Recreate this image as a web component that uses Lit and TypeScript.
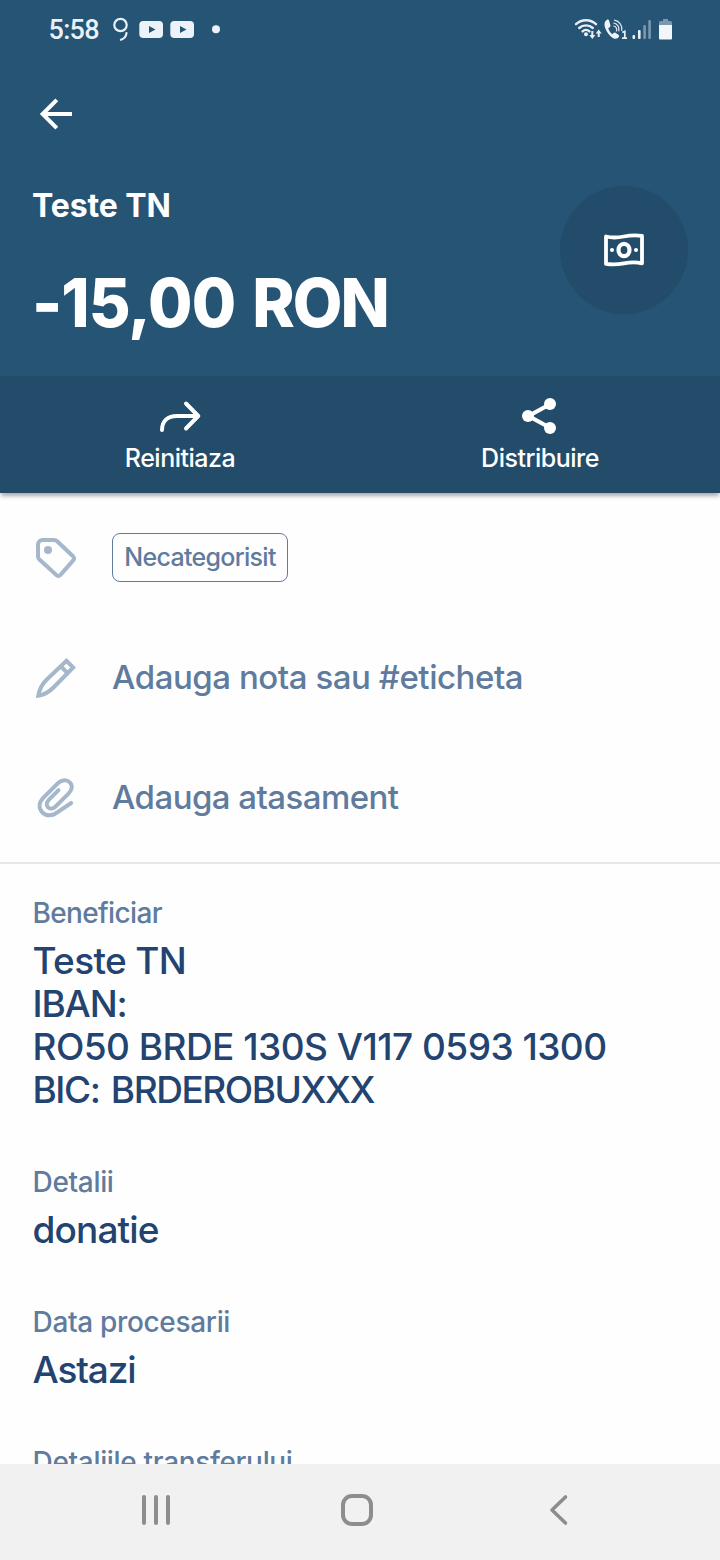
import { LitElement, html, css, svg } from "lit";
import { customElement } from "lit/decorators.js";

const wifi = svg`
  <g fill="none" stroke="#e9eef5" stroke-width="2.4" stroke-linecap="round">
    <path d="M16 24.2a14.5 14.5 0 0 1 20 0"/>
    <path d="M19.2 28a10 10 0 0 1 13.6 0"/>
    <path d="M22.6 31.4a5 5 0 0 1 6.8 0"/>
  </g>
  <circle cx="26" cy="34.2" r="2" fill="#e9eef5"/>
  <path d="M31.300 31v4h-2l3 4 3-4h-2v-4zM37.700 37v-3.500h-2l3-4 3 4h-2V37z" fill="#e9eef5"/>`;

const call = svg`
  <path d="M47.2 19.6c-2.6 1.6-3.4 4.4-2.2 8 1.8 5 4.6 8.6 8.6 10.8 2.2 1.1 4.6.2 5.4-1.8.3-.8.1-1.3-.6-1.8l-3-2c-.7-.4-1.3-.2-1.9.3l-1.2 1.1c-2-1.6-3.4-3.6-4-6l1.6-1.2c.6-.5.7-1 .5-1.7l-1.3-4.6c-.3-1-.9-1.6-1.9-1.1z" fill="#eef3f8"/>
  <g fill="none" stroke="#dfe7ef" stroke-width="1.2" stroke-linecap="round">
    <path d="M53.8 26a3.600 3.600 0 0 1 2.600 5"/>
    <path d="M53.8 23a6.500 6.500 0 0 1 5 8"/>
    <path d="M54.5 20.2a9 9 0 0 1 7.300 10.300"/>
  </g>`;

@customElement("app-root")
export class AppRoot extends LitElement {
  static styles = css`
    :host {
      display: flex;
      flex-direction: column;
      width: 720px;
      height: 1560px;
      overflow: hidden;
      background: #fefefe;
      font-family: Inter, "Liberation Sans", sans-serif;
      color: #234370;
    }
    svg { display: block; flex: none; }
    .head { background: #265475; color: #fff; height: 376px; flex: none; }
    .status { display: flex; justify-content: space-between; height: 60px; }
    .left { display: flex; padding-left: 48.5px; }
    .clock {
      width: 60.5px;
      font: 500 27px/60px Roboto, sans-serif;
      letter-spacing: -0.7px;
      color: #eaf0f7;
    }
    .back { box-sizing: border-box; padding: 34px 0 0 36px; height: 108px; }
    .summary { display: flex; justify-content: space-between; padding: 18px 32px 0 32px; }
    .name { font-weight: 700; font-size: 32px; line-height: 40px; letter-spacing: -0.12px; white-space: nowrap; }
    .amount {
      margin-top: 37px;
      font-weight: 800;
      font-size: 67px;
      line-height: 80px;
      letter-spacing: -1px;
      white-space: nowrap;
      transform: scaleX(0.96);
      transform-origin: left;
    }
    .currency { letter-spacing: -2px; margin-left: 4px; }
    .disc {
      display: flex;
      align-items: center;
      justify-content: center;
      width: 128px;
      height: 128px;
      border-radius: 50%;
      background: #224c6a;
    }
    .actions {
      display: grid;
      grid-template-columns: 1fr 1fr;
      flex: none;
      height: 117px;
      background: #224c6a;
      color: #fff;
      box-shadow: 0 4px 4px -1px rgba(0, 0, 0, 0.33);
    }
    .action { display: flex; flex-direction: column; align-items: center; padding-top: 16px; }
    .action span { font-size: 25px; font-weight: 500; line-height: 30px; margin-top: 3px; letter-spacing: -0.5px; }
    .rows { padding-top: 5px; height: 364px; flex: none; border-bottom: 2px solid #e4e8ec; }
    .row {
      display: flex;
      align-items: center;
      height: 120px;
      padding-left: 32px;
      gap: 32px;
      font-size: 33px;
      font-weight: 500;
      color: #5f7b9d;
    }
    .row span { margin-bottom: 2px; }
    .note { letter-spacing: -0.45px; }
    .attach { letter-spacing: -0.55px; }
    .chip {
      box-sizing: border-box;
      width: 176px;
      height: 49px;
      border: 1px solid #5f7b9d;
      border-radius: 8px;
      font-size: 25px;
      line-height: 47px;
      letter-spacing: -0.7px;
      text-align: center;
      white-space: nowrap;
    }
    .details { flex: 1; min-height: 0; overflow: hidden; padding: 32px 33px 0 32.5px; }
    .label { font-size: 28px; font-weight: 500; line-height: 34px; letter-spacing: -0.33px; color: #5f7b9d; }
    .value {
      font-size: 37px;
      font-weight: 500;
      line-height: 43px;
      margin: 9px 0 54px;
      letter-spacing: -0.85px;
      white-space: nowrap;
    }
    .tight { letter-spacing: -0.65px; }
    .short { letter-spacing: -1.15px; }
    .iban { letter-spacing: -0.54px; }
    .bic { letter-spacing: -1.45px; word-spacing: 3px; }
    .nav { flex: none; height: 96px; background: #f1f1f1; }
  `;

  render() {
    return html`
      <header class="head">
        <div class="status">
          <div class="left">
            <span class="clock">5:58</span>
            <svg width="120" height="60" viewBox="109 0 120 60">
              <g fill="none" stroke="#eaf0f7" stroke-width="2.2">
                <circle cx="120.5" cy="25" r="6.2"/>
                <path d="M126.500 33c-.4 3.600-2.300 5.800-5.600 6.800" stroke-linecap="round"/>
              </g>
              <g fill="#edf2f8">
                <rect x="139.300" y="21" width="23.700" height="17" rx="4"/>
                <rect x="170.300" y="21" width="23.700" height="17" rx="4"/>
                <circle cx="216" cy="29.300" r="4"/>
              </g>
              <path d="M149 26v7l6.500-3.500zM180 26v7l6.500-3.500z" fill="#265475"/>
            </svg>
          </div>
          <svg width="160" height="60" viewBox="0 0 160 60">
            ${wifi}${call}
            <path d="M62.300 32.600l2.500-1.300V38M62 38.200h5" fill="none" stroke="#eaf0f7" stroke-width="1.700"/>
            <g fill="#edf2f8">
              <rect x="72.500" y="35" width="2.600" height="4" rx="1"/>
              <rect x="78" y="30" width="2.600" height="9" rx="1"/>
            </g>
            <g fill="#7c98ae">
              <rect x="83.300" y="25" width="2.600" height="14" rx="1"/>
              <rect x="88.300" y="20" width="2.600" height="19" rx="1"/>
              <path d="M99 26v-3.500q0-1.500 1.500-1.500H103v-2h5v2h2.500q1.500 0 1.500 1.500V26z"/>
            </g>
            <path d="M99 25h13v13.500q0 1-1 1h-11q-1 0-1-1z" fill="#f2f6fb"/>
          </svg>
        </div>
        <div class="back">
          <svg width="40" height="40" viewBox="0 0 40 40" fill="none" stroke="#fff" stroke-width="4">
            <path d="M36 20H7M20.800 5.800L6.600 20l14.200 14.200"/>
          </svg>
        </div>
        <div class="summary">
          <div>
            <div class="name">Teste TN</div>
            <div class="amount">-15,00 <span class="currency">RON</span></div>
          </div>
          <div class="disc">
            <svg width="48" height="48" viewBox="0 0 48 48" fill="none" stroke="#fff" stroke-width="3.800" stroke-linejoin="round">
              <path d="M6 10.500c6 1.500 12 1.200 18 0s11-1.600 18-.6v27.400c-6-1.500-12-1.200-18 0s-11 1.600-18 .6z"/>
              <ellipse cx="24" cy="24" rx="5.500" ry="6.200" stroke-width="4.200"/>
              <g fill="#fff" stroke="none"><circle cx="12" cy="24" r="2"/><circle cx="36" cy="24" r="2"/></g>
            </svg>
          </div>
        </div>
      </header>
      <section class="actions">
        <div class="action">
          <svg width="48" height="48" viewBox="0 0 48 48" fill="none" stroke="#fff" stroke-width="4" stroke-linecap="round" stroke-linejoin="round">
            <path d="M6 38C6 28.500 12 24 21 24h21M30 11.500L42.300 24 30 36.500"/>
          </svg>
          <span class="again">Reinitiaza</span>
        </div>
        <div class="action">
          <svg width="48" height="48" viewBox="0 0 48 48" fill="#fff">
            <path d="M34.500 12L12.500 24l22 12" fill="none" stroke="#fff" stroke-width="4.200"/>
            <circle cx="34" cy="12" r="6"/><circle cx="12" cy="24" r="6"/><circle cx="34" cy="36" r="6"/>
          </svg>
          <span class="share">Distribuire</span>
        </div>
      </section>
      <section class="rows">
        <div class="row">
          <svg width="48" height="48" viewBox="0 0 48 48" fill="none" stroke="#a5b7ca" stroke-width="4" stroke-linejoin="round">
            <path d="M6 10.500A4.500 4.500 0 0 1 10.500 6H22q1.800 0 3.200 1.200L41 22.300q2.200 2.200 0 4.400L28.500 40.800q-2.200 2.200-4.400 0L7.200 25.200Q6 24 6 22.200z"/>
            <circle cx="16" cy="16" r="4" fill="#a5b7ca" stroke="none"/>
          </svg>
          <span class="chip">Necategorisit</span>
        </div>
        <div class="row">
          <svg width="48" height="48" viewBox="0 0 48 48" fill="none" stroke="#a5b7ca" stroke-width="4">
            <path d="M6.300 41.700c1-6.200 3.500-11.200 8-15.700L34.500 6.800l6.700 6.700L21.500 33.500c-4.500 4.500-9 7.200-15.200 8.200zM28.500 12l7.500 7.500"/>
          </svg>
          <span class="note">Adauga nota sau #eticheta</span>
        </div>
        <div class="row">
          <svg width="48" height="48" viewBox="0 0 48 48" fill="none" stroke="#a5b7ca" stroke-width="4" stroke-linecap="round">
            <path d="M26.500 16.200L17 25.700c-2.700 2.700-3 5.800-1 7.700s5.100 1.700 7.700-1L36.500 19.600c4-4 4.200-8.400 1.300-11.300s-8.100-2.900-11.800.8L11.500 23.600c-5 5-4.800 10.800-1.200 14.700s10.400 4.100 15 0L39.200 29"/>
          </svg>
          <span class="attach">Adauga atasament</span>
        </div>
      </section>
      <section class="details">
        <div class="label tight">Beneficiar</div>
        <div class="value">
          <div class="tight">Teste TN</div>
          <div class="short">IBAN:</div>
          <div class="iban">RO50 BRDE 130S V117 0593 1300</div>
          <div class="bic">BIC: BRDEROBUXXX</div>
        </div>
        <div class="label">Detalii</div>
        <div class="value">donatie</div>
        <div class="label">Data procesarii</div>
        <div class="value short">Astazi</div>
        <div class="label">Detaliile transferului</div>
      </section>
      <nav class="nav">
        <svg width="720" height="96" viewBox="0 0 720 96" fill="none" stroke="#8d8d8d" stroke-width="4" stroke-linecap="round">
          <path d="M144 33v26M156 33v26M168 33v26"/>
          <rect x="343" y="32" width="28" height="28" rx="9"/>
          <path d="M565.500 33L552 46l13.500 13" stroke-width="3.600" stroke-linejoin="round"/>
        </svg>
      </nav>
    `;
  }
}
